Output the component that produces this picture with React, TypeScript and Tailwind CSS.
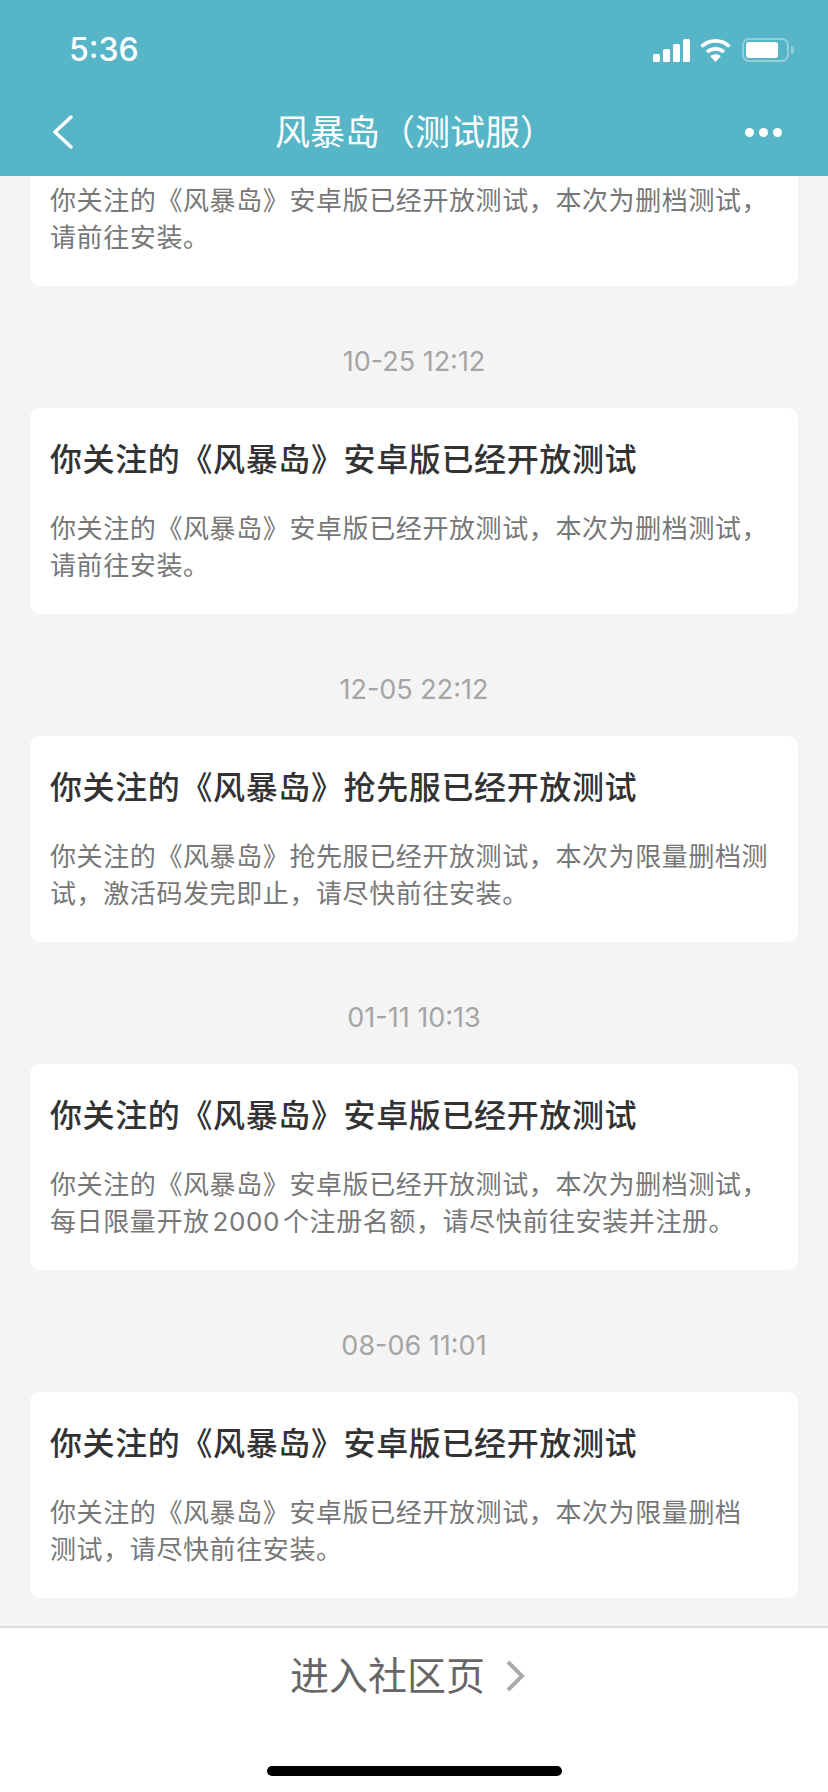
const messages = [
  {
    time: "10-25 12:12",
    title: "你关注的《风暴岛》安卓版已经开放测试",
    body: "你关注的《风暴岛》安卓版已经开放测试，本次为删档测试，\n请前往安装。",
  },
  {
    time: "12-05 22:12",
    title: "你关注的《风暴岛》抢先服已经开放测试",
    body: "你关注的《风暴岛》抢先服已经开放测试，本次为限量删档测\n试，激活码发完即止，请尽快前往安装。",
  },
  {
    time: "01-11 10:13",
    title: "你关注的《风暴岛》安卓版已经开放测试",
    body: "你关注的《风暴岛》安卓版已经开放测试，本次为删档测试，\n每日限量开放\u200A2000\u200A个注册名额，请尽快前往安装并注册。",
  },
  {
    time: "08-06 11:01",
    title: "你关注的《风暴岛》安卓版已经开放测试",
    body: "你关注的《风暴岛》安卓版已经开放测试，本次为限量删档\n测试，请尽快前往安装。",
  },
];

// Status bar icons
function StatusIcons() {
  return (
    <div className="flex items-center">
      <svg width="37" height="23" viewBox="0 0 37 23" fill="white">
        <rect x="0" y="15" width="7" height="8" rx="1.5" />
        <rect x="10" y="10" width="7" height="13" rx="1.5" />
        <rect x="20" y="5" width="7" height="18" rx="1.5" />
        <rect x="30" y="0" width="7" height="23" rx="1.5" />
      </svg>
      <svg className="ml-[10px]" width="31" height="23" viewBox="0 0 31 23" fill="none" stroke="white" strokeWidth="3.6">
        <path d="M1.5 7.5C9.5 0 21.5 0 29.5 7.5" />
        <path d="M7 13C11.8 8.8 19.2 8.8 24 13" />
        <path d="M15.5 23L10.3 17.2C13.2 14.6 17.8 14.6 20.7 17.2Z" fill="white" stroke="none" />
      </svg>
      <div className="ml-[11px] flex items-center">
        <div className="flex h-[24px] w-[47px] items-center rounded-[7px] border-2 border-white/35 p-[2px]">
          <div className="h-[16px] w-[32px] rounded-[3px] bg-white" />
        </div>
        <div className="ml-[2px] h-[8px] w-[3px] rounded-r-[3px] bg-white/35" />
      </div>
    </div>
  );
}

function Card({ title, body }: { title: string; body: string }) {
  return (
    <div className="rounded-[10px] bg-white px-[20px] pb-[30px] pt-[30px]">
      <h2 className="text-[32px] font-medium leading-[44px] tracking-[0.62px] text-[#333333]">{title}</h2>
      <p className="mt-[28px] whitespace-pre-line text-[26px] leading-[37px] tracking-[0.6px] text-[#777777]">{body}</p>
    </div>
  );
}

export default function App() {
  return (
    <div
      lang="zh-CN"
      className="flex h-[1792px] w-[828px] flex-col overflow-hidden bg-[#f4f4f4] font-['Inter','Noto_Sans_CJK_SC',sans-serif]"
    >
      {/* Header */}
      <header className="h-[176px] shrink-0 bg-[#56b5c7] text-white">
        <div className="flex h-[100px] items-center justify-between pl-[69px] pr-[34px]">
          <span className="text-[32px] font-medium leading-none">5:36</span>
          <StatusIcons />
        </div>
        <div className="flex h-[64px] items-center justify-between pl-[53px] pr-[46px]">
          <svg width="20" height="34" viewBox="0 0 20 34" fill="none" stroke="white" strokeWidth="3.4" strokeLinecap="round" strokeLinejoin="round">
            <path d="M18 2L2 17L18 32" />
          </svg>
          <h1 className="ml-[12px] text-[35px] leading-[44px]">风暴岛（测试服）</h1>
          <div className="flex gap-[5px]">
            <span className="h-[9px] w-[9px] rounded-full bg-white" />
            <span className="h-[9px] w-[9px] rounded-full bg-white" />
            <span className="h-[9px] w-[9px] rounded-full bg-white" />
          </div>
        </div>
      </header>

      {/* Message list */}
      <main className="flex-1 overflow-hidden px-[30px]">
        <div className="rounded-b-[10px] bg-white px-[20px] pb-[30px] pt-[6px]">
          <p className="whitespace-pre-line text-[26px] leading-[37px] tracking-[0.6px] text-[#777777]">
            {"你关注的《风暴岛》安卓版已经开放测试，本次为删档测试，\n请前往安装。"}
          </p>
        </div>
        {messages.map((m) => (
          <div key={m.time}>
            <div className="mb-[28px] mt-[58px] text-center text-[27px] leading-[36px] text-[#a5a5a5]">{m.time}</div>
            <Card title={m.title} body={m.body} />
          </div>
        ))}
      </main>

      {/* Footer */}
      <footer className="h-[166px] shrink-0 border-t-2 border-[#dddddd] bg-white">
        <div className="flex h-[96px] items-center justify-center pr-[13px]">
          <span className="text-[39px] leading-[48px] text-[#666666]">进入社区页</span>
          <svg className="ml-[20px]" width="20" height="32" viewBox="0 0 20 32" fill="none" stroke="#aaaaaa" strokeWidth="4">
            <path d="M3 2L17 16L3 30" />
          </svg>
        </div>
        <div className="mx-auto mt-[42px] h-[10px] w-[295px] rounded-full bg-black" />
      </footer>
    </div>
  );
}
